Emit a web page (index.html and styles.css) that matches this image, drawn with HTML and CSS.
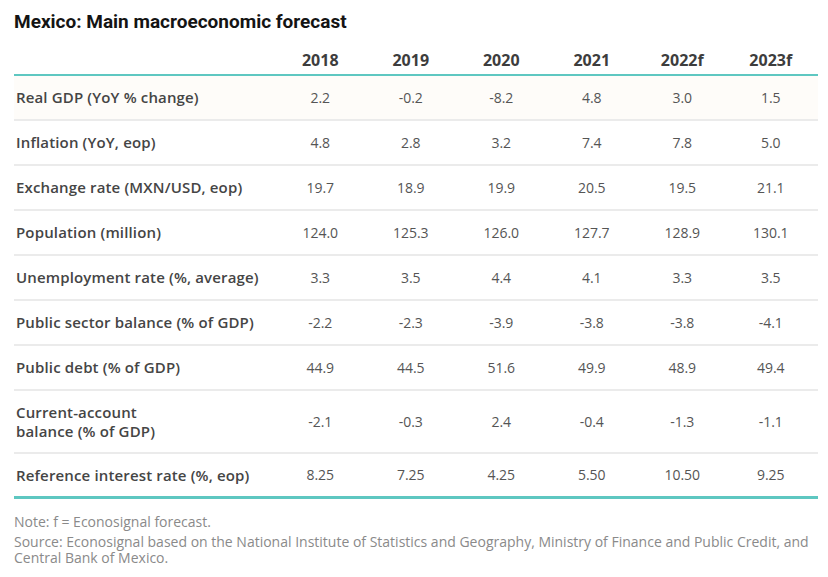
FILE: index.html
```html
<!DOCTYPE html>
<html lang="en">
<head>
<meta charset="utf-8">
<title>Mexico: Main macroeconomic forecast</title>
<link rel="stylesheet" href="styles.css">
</head>
<body>
<div class="page">
  <h1 class="title">Mexico: Main macroeconomic forecast</h1>
  <table class="forecast">
    <thead>
      <tr>
        <th class="label-head"></th>
        <th>2018</th>
        <th>2019</th>
        <th>2020</th>
        <th>2021</th>
        <th>2022f</th>
        <th class="last">2023f</th>
      </tr>
    </thead>
    <tbody>
      <tr class="shaded">
        <td class="label">Real GDP (YoY % change)</td>
        <td>2.2</td><td>-0.2</td><td>-8.2</td><td>4.8</td><td>3.0</td><td class="last">1.5</td>
      </tr>
      <tr>
        <td class="label">Inflation (YoY, eop)</td>
        <td>4.8</td><td>2.8</td><td>3.2</td><td>7.4</td><td>7.8</td><td class="last">5.0</td>
      </tr>
      <tr>
        <td class="label">Exchange rate (MXN/USD, eop)</td>
        <td>19.7</td><td>18.9</td><td>19.9</td><td>20.5</td><td>19.5</td><td class="last">21.1</td>
      </tr>
      <tr>
        <td class="label">Population (million)</td>
        <td>124.0</td><td>125.3</td><td>126.0</td><td>127.7</td><td>128.9</td><td class="last">130.1</td>
      </tr>
      <tr>
        <td class="label">Unemployment rate (%, average)</td>
        <td>3.3</td><td>3.5</td><td>4.4</td><td>4.1</td><td>3.3</td><td class="last">3.5</td>
      </tr>
      <tr>
        <td class="label">Public sector balance (% of GDP)</td>
        <td>-2.2</td><td>-2.3</td><td>-3.9</td><td>-3.8</td><td>-3.8</td><td class="last">-4.1</td>
      </tr>
      <tr>
        <td class="label">Public debt (% of GDP)</td>
        <td>44.9</td><td>44.5</td><td>51.6</td><td>49.9</td><td>48.9</td><td class="last">49.4</td>
      </tr>
      <tr class="tall">
        <td class="label">Current-account<br>balance (% of GDP)</td>
        <td>-2.1</td><td>-0.3</td><td>2.4</td><td>-0.4</td><td>-1.3</td><td class="last">-1.1</td>
      </tr>
      <tr class="final">
        <td class="label">Reference interest rate (%, eop)</td>
        <td>8.25</td><td>7.25</td><td>4.25</td><td>5.50</td><td>10.50</td><td class="last">9.25</td>
      </tr>
    </tbody>
  </table>
  <div class="notes">
    <p class="note">Note: f = Econosignal forecast.</p>
    <p class="source">Source: Econosignal based on the National Institute of Statistics and Geography, Ministry of Finance and Public Credit, and Central Bank of Mexico.</p>
  </div>
</div>
</body>
</html>
```
FILE: styles.css
```css
html, body {
  margin: 0;
  padding: 0;
  background: #ffffff;
}

.page {
  width: 804px;
  padding: 10px 10px 0 14px;
  font-family: "Open Sans", "Liberation Sans", sans-serif;
}

.title {
  margin: 0;
  font-family: Roboto, "Liberation Sans", sans-serif;
  font-weight: 700;
  font-size: 19px;
  line-height: 24px;
  color: #141414;
}

.forecast {
  width: 804px;
  table-layout: fixed;
  border-collapse: separate;
  border-spacing: 0;
}

.forecast th {
  padding: 16px 0 4px;
  line-height: 20px;
  font-size: 16px;
  font-weight: 700;
  color: #3d3d3d;
  text-align: center;
  border-bottom: 2px solid #5ec7c1;
}

.forecast .label-head {
  width: 261px;
}

.forecast td {
  height: 43px;
  padding: 0;
  font-size: 14px;
  line-height: 18px;
  color: #555555;
  text-align: center;
  vertical-align: middle;
  border-bottom: 2px solid #ebebeb;
}

.forecast .last {
  padding-right: 4px;
}

.forecast td.label {
  padding-left: 2px;
  text-align: left;
  font-size: 15px;
  line-height: 19px;
  letter-spacing: 0.15px;
  font-weight: 600;
  color: #454545;
}

.forecast .shaded td {
  background: #fefcf9;
}

.forecast .tall td {
  height: 61px;
}

.forecast .final td {
  height: 42px;
  border-bottom: 3px solid #5ec7c1;
}

.notes {
  margin-top: 15px;
  font-size: 14px;
  line-height: 16px;
  color: #8a8a8a;
}

.notes p {
  margin: 0;
}

.notes .note {
  margin-bottom: 4px;
}
```
